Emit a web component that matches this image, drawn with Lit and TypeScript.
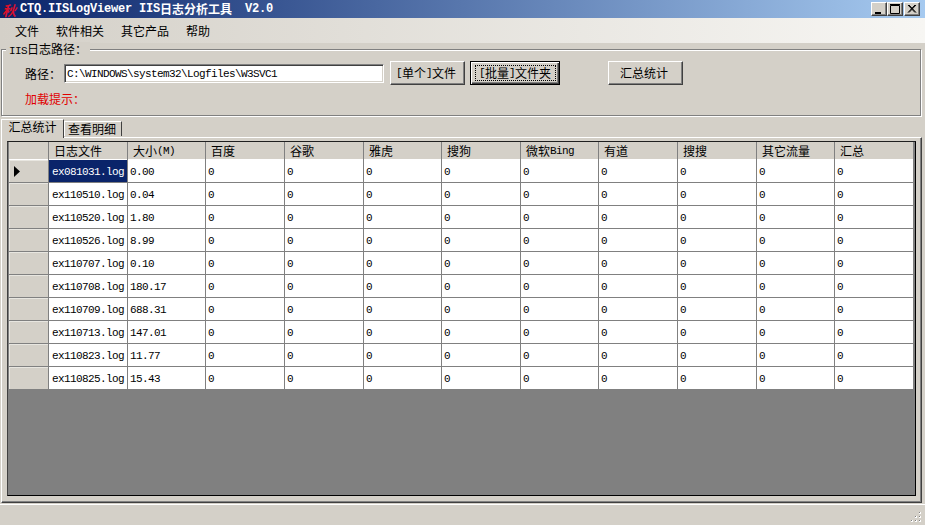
import { LitElement, html, css } from "lit";
import { customElement } from "lit/decorators.js";

const FILES: [string, string][] = [
  ["ex081031.log", "0.00"],
  ["ex110510.log", "0.04"],
  ["ex110520.log", "1.80"],
  ["ex110526.log", "8.99"],
  ["ex110707.log", "0.10"],
  ["ex110708.log", "180.17"],
  ["ex110709.log", "688.31"],
  ["ex110713.log", "147.01"],
  ["ex110823.log", "11.77"],
  ["ex110825.log", "15.43"],
];

@customElement("app-root")
export class AppRoot extends LitElement {
  static styles = css`
    :host {
      display: flex;
      flex-direction: column;
      width: 925px;
      height: 525px;
      overflow: hidden;
      background: #d4d0c8;
      font: 12px/14px "Noto Sans CJK SC", sans-serif;
      color: #000;
    }
    .l {
      font-family: "Liberation Mono", monospace;
      font-size: 11px;
      letter-spacing: -0.6px;
    }
    .title {
      flex: none;
      height: 18px;
      display: flex;
      align-items: flex-start;
      background: linear-gradient(90deg, #0a246a, #a6caf0);
      color: #fff;
      font-weight: 700;
      line-height: 18px;
      white-space: pre;
    }
    .ico {
      width: 20px;
      height: 18px;
      flex: none;
      padding-left: 2px;
      box-sizing: border-box;
      color: #d8102c;
      font-size: 14px;
      line-height: 21px;
      font-style: italic;
      font-weight: 700;
    }
    .title .t {
      font-family: "Liberation Mono", monospace;
      font-size: 12px;
      letter-spacing: -0.2px;
    }
    .title .v { margin-left: -1px; }
    .ctl {
      margin-left: auto;
      margin-right: 5px;
      margin-top: 2px;
      display: flex;
    }
    .ctl i {
      width: 16px;
      height: 14px;
      box-sizing: border-box;
      background: #d4d0c8;
      border: 1px solid;
      border-color: #fff #404040 #404040 #fff;
      box-shadow: inset -1px -1px #808080;
      display: block;
    }
    .ctl i:last-child { margin-left: 1px; }
    .ctl svg { display: block; }
    .menu {
      flex: none;
      height: 25px;
      display: flex;
      align-items: center;
      gap: 17px;
      padding-left: 15px;
      background: linear-gradient(90deg, #d4d0c8, #f7f6f3);
    }
    .group {
      flex: none;
      position: relative;
      box-sizing: border-box;
      margin: 6px 4px 0 1px;
      height: 67px;
      border: 1px solid #808080;
      box-shadow: inset 1px 1px #fff, 1px 1px #fff;
      padding: 11px 0 0 23px;
    }
    .legend {
      position: absolute;
      left: 4px;
      top: -8px;
      padding: 0 3px;
      background: #d4d0c8;
    }
    .row1 {
      display: flex;
      align-items: center;
      height: 24px;
    }
    .row1 label { width: 39px; flex: none; margin-top: 2px; }
    .input {
      width: 320px;
      height: 19px;
      margin-top: 1px;
      box-sizing: border-box;
      margin-right: 6px;
      background: #fff;
      border: 1px solid;
      border-color: #808080 #fff #fff #808080;
      box-shadow: inset 1px 1px #404040, inset -1px -1px #d4d0c8;
      padding-left: 2px;
      display: flex;
      align-items: center;
      white-space: pre;
    }
    .btn {
      height: 24px;
      box-sizing: border-box;
      background: #d4d0c8;
      border: 1px solid;
      border-color: #fff #404040 #404040 #fff;
      box-shadow: inset -1px -1px #808080;
      display: flex;
      align-items: center;
      justify-content: center;
      padding: 0;
      font: inherit;
      color: inherit;
    }
    .b1 { width: 75px; margin-right: 5px; padding-right: 3px; }
    .b2 {
      width: 90px;
      margin-right: 48px;
      border: 1px solid #000;
      box-shadow: inset 1px 1px #fff, inset -1px -1px #404040, inset -2px -2px #808080;
    }
    .b2 .dot {
      border: 1px dotted #000;
      box-sizing: border-box;
      width: 81px;
      height: 16px;
      display: flex;
      align-items: center;
      justify-content: center;
      white-space: pre;
    }
    .warn {
      margin-top: 7px;
      color: #e00000;
    }
    .tabs {
      flex: none;
      display: flex;
      align-items: flex-end;
      height: 18px;
      margin: 3px 0 0 1px;
      position: relative;
      z-index: 1;
    }
    .tab {
      box-sizing: border-box;
      height: 15px;
      width: 58px;
      border: 1px solid;
      border-color: #fff #404040 transparent #fff;
      border-bottom: 0;
      display: flex;
      align-items: center;
      justify-content: center;
      margin-bottom: 1px;
      padding-right: 2px;
    }
    .tab.on {
      height: 19px;
      width: 63px;
      margin-bottom: -1px;
      background: #d4d0c8;
      padding: 0 0 5px;
    }
    .panel {
      flex: none;
      height: 366px;
      box-sizing: border-box;
      margin: 0 3px 0 1px;
      border: 1px solid;
      border-color: #fff #404040 #404040 #fff;
      box-shadow: inset -1px -1px #808080;
      padding: 3px 0 0 5px;
    }
    .grid {
      box-sizing: border-box;
      width: 909px;
      height: 355px;
      border: 1px solid;
      border-color: #202020 #000 #000 #404040;
      background: #808080;
      padding: 0 0 0 1px;
      display: grid;
      grid-template-columns: 40px 79px 78px 79px 79px 78px 79px 78px 79px 79px 78px 79px;
      grid-auto-rows: 23px;
      grid-template-rows: 18px;
      align-content: start;
    }
    .c {
      box-sizing: border-box;
      background: #fff;
      border-right: 1px solid #808080;
      border-bottom: 1px solid #808080;
      padding: 1px 0 0 2px;
      display: flex;
      align-items: center;
      white-space: pre;
      overflow: hidden;
    }
    .h {
      background: #d4d0c8;
      padding: 0 0 0 5px;
      border-bottom: 0;
      box-shadow: inset 0 -1px #fff;
    }
    .rh {
      background: #d4d0c8;
      box-shadow: inset 1px 1px #e8e6e0;
      padding: 0 0 0 5px;
    }
    .name { padding-left: 3px; }
    .sel { background: #0a246a; color: #fff; }
    .status {
      flex: 1;
      position: relative;
      border-top: 1px solid #fff;
      margin-top: 1px;
    }
    .grip {
      position: absolute;
      right: 3px;
      bottom: 2px;
      display: block;
    }
  `;

  render() {
    const heads: unknown[] = [
      "日志文件",
      html`大小<span class="l">(M)</span>`,
      "百度",
      "谷歌",
      "雅虎",
      "搜狗",
      html`微软<span class="l">Bing</span>`,
      "有道",
      "搜搜",
      "其它流量",
      "汇总",
    ];
    return html`
      <div class="title">
        <span class="ico">秋</span><span class="t">CTQ.IISLogViewer IIS</span>日志分析工具<span class="t v">  V2.0</span>
        <div class="ctl">
          <i><svg width="14" height="12"><rect x="3" y="9" width="6" height="2" fill="#000" /></svg></i>
          <i><svg width="14" height="12"><path d="M2.5 2.5h9v8h-9z M2 1.5h10" fill="none" stroke="#000" /></svg></i>
          <i><svg width="14" height="12"><path d="M3 2l7 7.5M4 2l7 7.5M10 2l-7 7.5M11 2l-7 7.5" stroke="#000" fill="none" /></svg></i>
        </div>
      </div>
      <div class="menu"><span>文件</span><span>软件相关</span><span>其它产品</span><span>帮助</span></div>
      <div class="group">
        <div class="legend"><span class="l">IIS</span>日志路径：</div>
        <div class="row1">
          <label>路径：</label>
          <div class="input"><span class="l">C:\\WINDOWS\\system32\\Logfiles\\W3SVC1</span></div>
          <button class="btn b1"><span class="l">[</span>单个<span class="l">]</span>文件</button>
          <button class="btn b2"><span class="dot"><span class="l">[</span>批量<span class="l">]</span>文件夹</span></button>
          <button class="btn b1">汇总统计</button>
        </div>
        <div class="warn">加载提示：</div>
      </div>
      <div class="tabs"><div class="tab on">汇总统计</div><div class="tab">查看明细</div></div>
      <div class="panel">
        <div class="grid">
          <div class="c h"></div>
          ${heads.map((h) => html`<div class="c h">${h}</div>`)}
          ${FILES.map(
            ([n, s], i) => html`
              <div class="c rh">
                ${i === 0
                  ? html`<svg width="7" height="11"><path d="M0 0l6 5.5L0 11z" fill="#000" /></svg>`
                  : ""}
              </div>
              <div class="c name ${i === 0 ? "sel" : ""}"><span class="l">${n}</span></div>
              <div class="c"><span class="l">${s}</span></div>
              ${Array.from({ length: 9 }, () => html`<div class="c"><span class="l">0</span></div>`)}
            `
          )}
        </div>
      </div>
      <div class="status">
        <svg class="grip" width="12" height="12">
          <path d="M9 1h2v2H9zM5 5h2v2H5zM9 5h2v2H9zM1 9h2v2H1zM5 9h2v2H5zM9 9h2v2H9z" fill="#fff" />
          <path d="M9 1h1v1H9zM5 5h1v1H5zM9 5h1v1H9zM1 9h1v1H1zM5 9h1v1H5zM9 9h1v1H9z" fill="#808080" />
        </svg>
      </div>
    `;
  }
}
